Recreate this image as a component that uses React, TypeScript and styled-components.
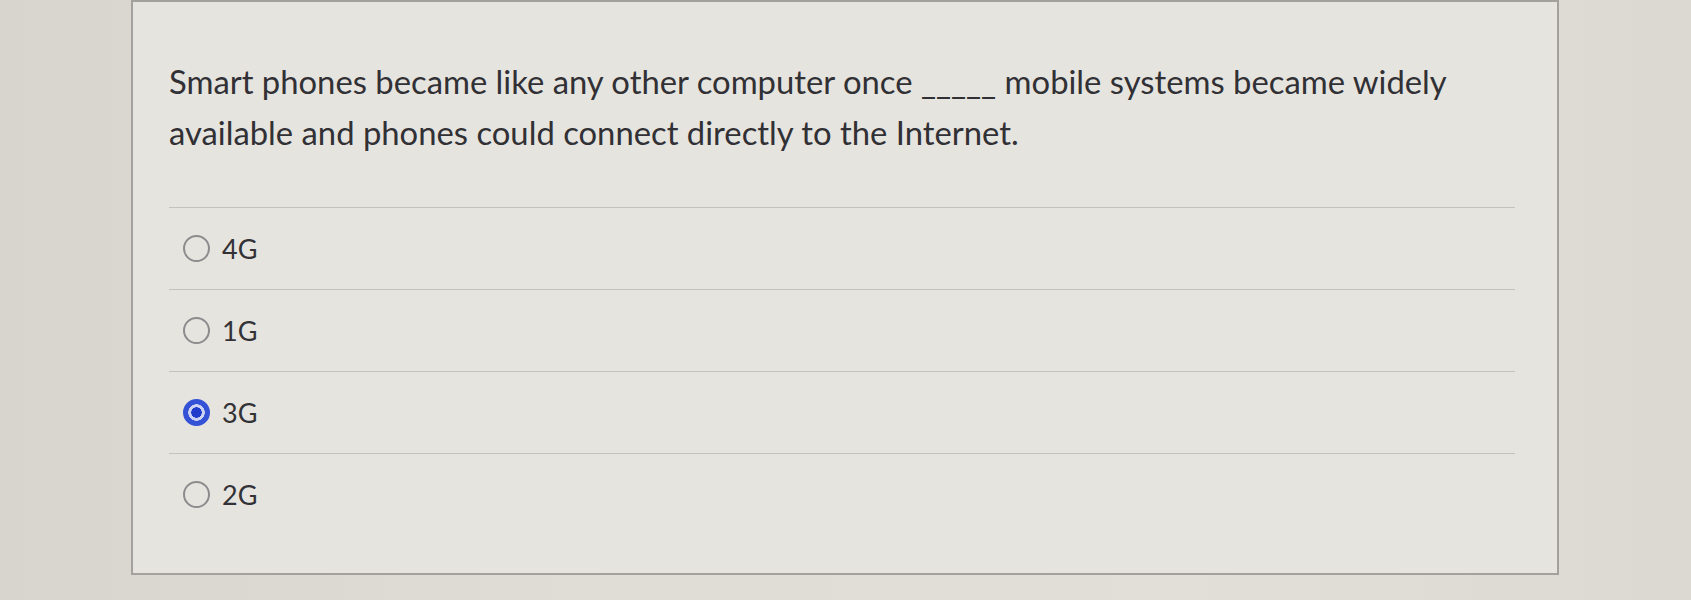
import styled, { createGlobalStyle } from 'styled-components';

const GlobalStyle = createGlobalStyle`
    html, body {
        margin: 0;
        padding: 0;
    }
    body {
        width: 1691px;
        height: 600px;
        overflow: hidden;
        background: linear-gradient(90deg, #d8d5cf 0%, #dfdcd6 30%, #e2dfd9 70%, #dcd9d3 100%);
        font-family: Lato, 'Open Sans', sans-serif;
    }
`;

const Page = styled.div`
    padding: 0 0 0 131px;
`;

const Card = styled.div`
    width: 1428px;
    height: 575px;
    border: 2px solid #a3a19e;
    background: #e6e4df;
    padding: 54px 42px 0 36px;
    box-sizing: border-box;
`;

const Question = styled.p`
    margin: 0 0 49px 0;
    font-size: 32.8px;
    line-height: 51px;
    color: #313035;
    max-width: 1320px;
`;

const OptionList = styled.ul`
    list-style: none;
    margin: 0;
    padding: 0;
`;

const Option = styled.li`
    display: flex;
    align-items: center;
    gap: 12px;
    height: 82px;
    padding-left: 14px;
    border-top: 1px solid #c4c2be;
    box-sizing: border-box;
`;

const Radio = styled.span<{ $checked?: boolean }>`
    width: 27px;
    height: 27px;
    border-radius: 50%;
    box-sizing: border-box;
    flex-shrink: 0;
    border: ${props => (props.$checked ? '3px solid #3452d6' : '2px solid #8c8b8d')};
    background: ${props =>
        props.$checked
            ? 'radial-gradient(circle, #1f3ccc 0 5px, #cdd4f3 5.5px 8px, #3452d6 8.5px)'
            : 'transparent'};
`;

const Label = styled.span`
    font-size: 27px;
    color: #333237;
`;

const options = [
    { id: '4g', text: '4G' },
    { id: '1g', text: '1G' },
    { id: '3g', text: '3G', checked: true },
    { id: '2g', text: '2G' },
];

const App = () => (
    <>
        <GlobalStyle />
        <Page>
            <Card>
                <Question>
                    Smart phones became like any other computer once _____ mobile systems became widely
                    available and phones could connect directly to the Internet.
                </Question>
                <OptionList>
                    {options.map(option => (
                        <Option key={option.id}>
                            <Radio $checked={option.checked} />
                            <Label>{option.text}</Label>
                        </Option>
                    ))}
                </OptionList>
            </Card>
        </Page>
    </>
);

export default App;
